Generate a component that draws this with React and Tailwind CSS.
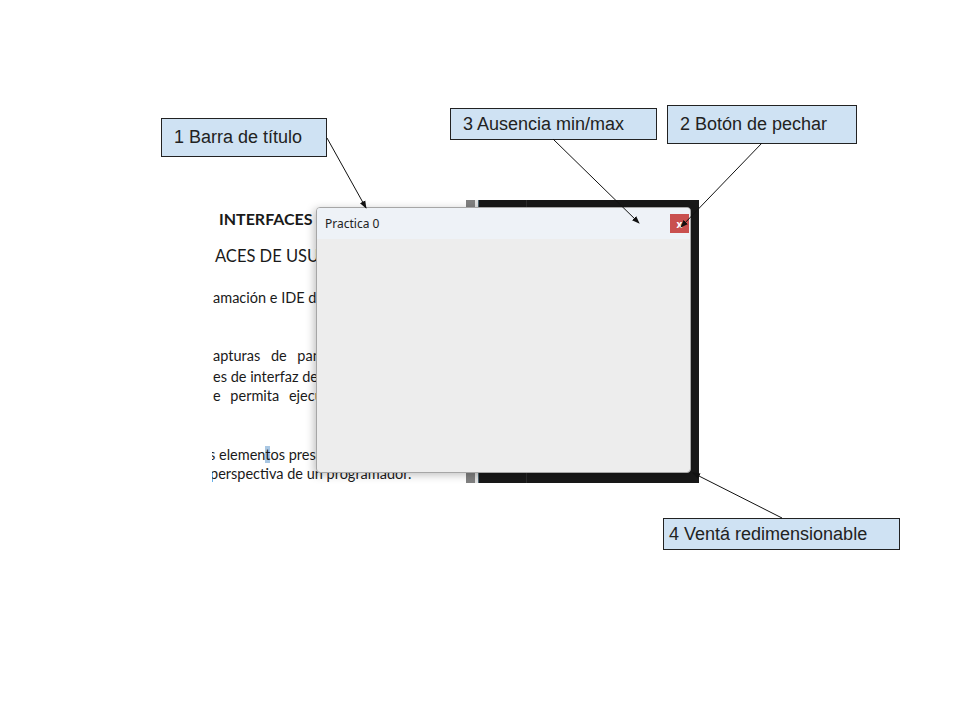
const docFont = { fontFamily: 'Lato, "Open Sans", sans-serif' }
const uiFont = { fontFamily: '"Noto Sans", "Open Sans", sans-serif' }
const slideFont = { fontFamily: '"Liberation Sans", Arial, sans-serif' }

function Callout({ left, top, width, height, children }) {
  return (
    <div
      className="absolute flex items-center border border-[#222] bg-[#cfe2f3] pl-3 text-[18px] text-[#222]"
      style={{ left, top, width, height, ...slideFont }}
    >
      {children}
    </div>
  )
}

function DocLine({ top, left, className, children }) {
  return (
    <div className={`absolute whitespace-nowrap text-[#1a1a1a] ${className}`} style={{ top, left, ...docFont }}>
      {children}
    </div>
  )
}

function Screenshot() {
  return (
    <div className="absolute left-[212px] top-[200px] flex h-[283px] w-[487px] overflow-hidden">
      {/* document page behind the window */}
      <div className="relative h-full w-[254px] bg-white">
        <DocLine top={7} left={7} className="text-[16px] font-bold">INTERFACES DE USUARIO</DocLine>
        <DocLine top={44} left={3} className="text-[16.5px]">ACES DE USUARIO</DocLine>
        <DocLine top={87} left={1} className="text-[14.5px]">amación e IDE de desarrollo</DocLine>
        <DocLine top={145} left={1} className="text-[14.5px] [word-spacing:7px]">apturas de pantalla</DocLine>
        <DocLine top={166} left={1} className="text-[14.5px]">es de interfaz de usuario</DocLine>
        <DocLine top={185} left={1} className="text-[14.5px] [word-spacing:6px]">e permita ejecutar</DocLine>
        <DocLine top={244} left={-3} className="text-[14.5px]">
          s elemen<span className="bg-[#a9c7e3]">t</span>os presentes
        </DocLine>
        <DocLine top={263} left={-2} className="text-[14.5px]">perspectiva de un programador.</DocLine>
      </div>
      <div className="h-full w-[9px] bg-[#808080]" />
      <div className="h-full w-[3px] bg-[#e2e2e2]" />
      <div className="h-full w-[1px] bg-[#4d6470]" />
      <div className="h-full w-[47px] bg-[#181818]" />
      <div className="h-full w-[1px] bg-[#2c2c2c]" />
      <div className="h-full flex-1 bg-[#181818]" />
    </div>
  )
}

function AppWindow() {
  return (
    <div
      className="absolute left-[316px] top-[207px] flex h-[266px] w-[375px] flex-col overflow-hidden rounded-[4px] border border-[#a6a6a6] bg-[#ededed] shadow-[-2px_2px_8px_rgba(0,0,0,0.25)]"
      style={uiFont}
    >
      <div className="flex h-[31px] items-center justify-between bg-[#eef2f7] pl-[8px] pr-[1px]">
        <span className="text-[12px] text-[#222]">Practica 0</span>
        <div className="flex h-[19px] w-[19px] items-center justify-center bg-[#c9504f] text-[10px] font-bold leading-none text-white">
          x
        </div>
      </div>
      <div className="flex-1" />
    </div>
  )
}

function Arrows() {
  return (
    <svg className="pointer-events-none absolute left-0 top-0" width="960" height="720">
      <defs>
        <marker id="head" markerWidth="8" markerHeight="8" refX="7" refY="4" orient="auto" markerUnits="userSpaceOnUse">
          <path d="M0,1 L8,4 L0,7 Z" fill="#111" />
        </marker>
      </defs>
      <line x1="327" y1="138" x2="366" y2="208" stroke="#111" strokeWidth="1" markerEnd="url(#head)" />
      <line x1="553" y1="139" x2="639" y2="223" stroke="#111" strokeWidth="1" markerEnd="url(#head)" />
      <line x1="762" y1="143" x2="681" y2="227" stroke="#111" strokeWidth="1" markerEnd="url(#head)" />
      <line x1="782" y1="518" x2="693" y2="473" stroke="#111" strokeWidth="1" markerEnd="url(#head)" />
    </svg>
  )
}

export default function App() {
  return (
    <div className="relative h-[720px] w-[960px] overflow-hidden bg-white">
      <Screenshot />
      <AppWindow />
      <Callout left={161} top={118} width={166} height={39}>1 Barra de título</Callout>
      <Callout left={450} top={108} width={207} height={32}>3 Ausencia min/max</Callout>
      <Callout left={667} top={105} width={190} height={39}>2 Botón de pechar</Callout>
      <Callout left={663} top={518} width={237} height={32}>
        <span className="-ml-[7px]">4 Ventá redimensionable</span>
      </Callout>
      <Arrows />
    </div>
  )
}
